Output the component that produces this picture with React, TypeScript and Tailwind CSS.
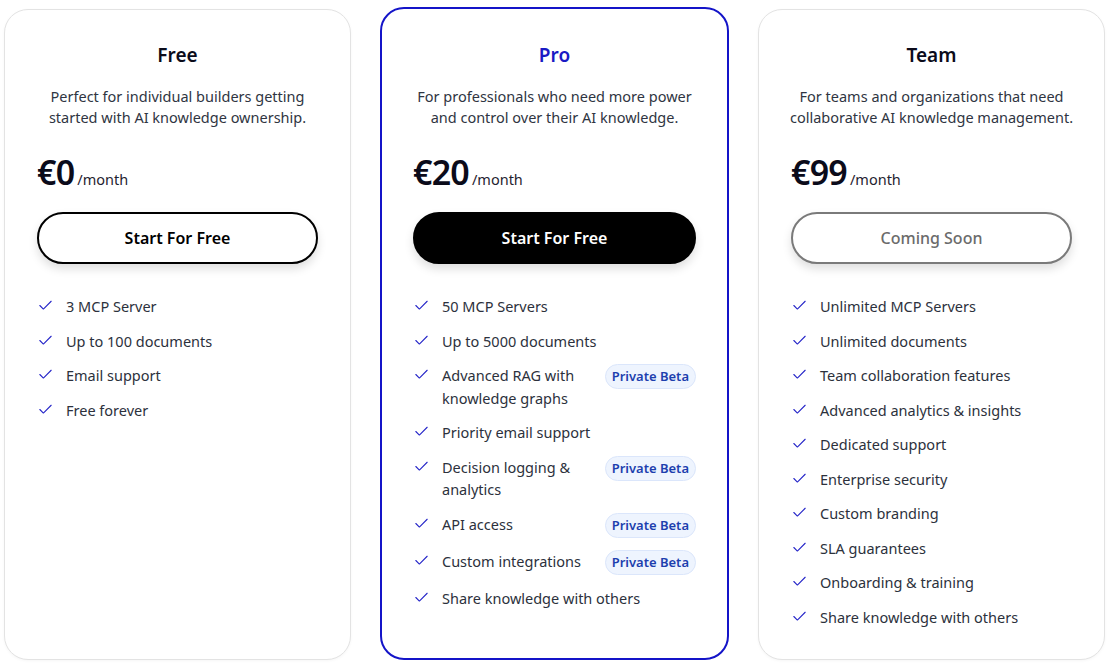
import React from 'react';
import { Check } from 'lucide-react';

type Feature = { label: string; beta?: boolean };

type Plan = {
  name: string;
  description: string;
  price: string;
  cta: string;
  variant: 'outline' | 'solid' | 'disabled';
  highlighted?: boolean;
  features: Feature[];
};

const plans: Plan[] = [
  {
    name: 'Free',
    description: 'Perfect for individual builders getting started with AI knowledge ownership.',
    price: '€0',
    cta: 'Start For Free',
    variant: 'outline',
    features: [
      { label: '3 MCP Server' },
      { label: 'Up to 100 documents' },
      { label: 'Email support' },
      { label: 'Free forever' },
    ],
  },
  {
    name: 'Pro',
    description: 'For professionals who need more power and control over their AI knowledge.',
    price: '€20',
    cta: 'Start For Free',
    variant: 'solid',
    highlighted: true,
    features: [
      { label: '50 MCP Servers' },
      { label: 'Up to 5000 documents' },
      { label: 'Advanced RAG with knowledge graphs', beta: true },
      { label: 'Priority email support' },
      { label: 'Decision logging & analytics', beta: true },
      { label: 'API access', beta: true },
      { label: 'Custom integrations', beta: true },
      { label: 'Share knowledge with others' },
    ],
  },
  {
    name: 'Team',
    description: 'For teams and organizations that need collaborative AI knowledge management.',
    price: '€99',
    cta: 'Coming Soon',
    variant: 'disabled',
    features: [
      { label: 'Unlimited MCP Servers' },
      { label: 'Unlimited documents' },
      { label: 'Team collaboration features' },
      { label: 'Advanced analytics & insights' },
      { label: 'Dedicated support' },
      { label: 'Enterprise security' },
      { label: 'Custom branding' },
      { label: 'SLA guarantees' },
      { label: 'Onboarding & training' },
      { label: 'Share knowledge with others' },
    ],
  },
];

function PlanCard({ plan }: { plan: Plan }) {
  const buttonClass =
    plan.variant === 'solid'
      ? 'bg-black text-white border-2 border-black font-semibold'
      : plan.variant === 'outline'
        ? 'bg-white text-black border-2 border-black font-semibold'
        : 'bg-white text-[#6b6b6b] border-2 border-[#7a7a7a] font-medium';

  return (
    <div
      className={`flex flex-col rounded-[24px] bg-white ${
        plan.highlighted
          ? 'border-2 border-[#1414c8] -mt-[2px] px-[31px] pt-[32px]'
          : 'border border-[#e3e3e3] px-[32px] pt-[31px] shadow-[0_1px_3px_rgba(0,0,0,0.04)]'
      }`}
    >
      {/* Header */}
      <h3
        className={`text-center text-[19px] font-semibold leading-[28px] ${
          plan.highlighted ? 'text-[#1a1ac4]' : 'text-[#0b0b1a]'
        }`}
      >
        {plan.name}
      </h3>
      <p className="-mx-2 mt-[17px] text-center text-[14.5px] leading-[21px] text-[#2f3542]">
        {plan.description}
      </p>

      {/* Price */}
      <div className="mt-[22px] flex items-baseline gap-[3px]">
        <span className="text-[34px] font-semibold leading-[44px] tracking-[-0.8px] text-[#0b0b1a]">{plan.price}</span>
        <span className="text-[14.5px] text-[#1f2330]">/month</span>
      </div>

      {/* CTA */}
      <button
        className={`mt-[18px] h-[52px] w-full rounded-full text-[16px] shadow-[0_5px_10px_rgba(0,0,0,0.13)] ${buttonClass}`}
      >
        {plan.cta}
      </button>

      {/* Features */}
      <ul className="mt-[31px] flex flex-col gap-3">
        {plan.features.map((f) => (
          <li key={f.label} className="flex items-start text-[14.5px] leading-[22.5px] text-[#2c313c]">
            <Check className="mr-[12px] mt-[2px] h-[17px] w-[17px] shrink-0 text-[#2424c8]" strokeWidth={1.5} />
            <span className="flex-1">{f.label}</span>
            {f.beta && (
              <span className="ml-3 flex h-[25px] shrink-0 items-center rounded-full border border-[#dbe6fb] bg-[#eef4fe] px-[6px] text-[13px] font-semibold text-[#1d3fae]">
                Private Beta
              </span>
            )}
          </li>
        ))}
      </ul>
    </div>
  );
}

export default function App() {
  return (
    <div
      className="min-h-screen bg-white px-[4px] pb-[4px] pt-[9px]"
      style={{ fontFamily: '"Noto Sans", "Open Sans", sans-serif' }}
    >
      <div className="grid h-[651px] grid-cols-[347px_349px_347px] gap-[29px]">
        {plans.map((p) => (
          <PlanCard key={p.name} plan={p} />
        ))}
      </div>
    </div>
  );
}
